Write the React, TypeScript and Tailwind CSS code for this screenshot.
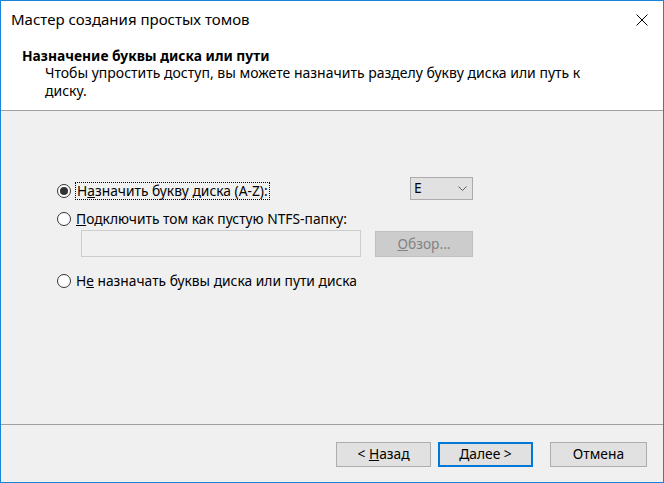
import React from "react";

function Radio({ checked }: { checked?: boolean }) {
  return (
    <div className="flex h-[14px] w-[14px] shrink-0 items-center justify-center rounded-full border border-[#333333] bg-white">
      {checked && <div className="h-[8px] w-[8px] rounded-full bg-[#333333]" />}
    </div>
  );
}

function Button({ children, isDefault, width }: { children: React.ReactNode; isDefault?: boolean; width: string }) {
  return (
    <div
      className={
        "flex h-[25px] items-center justify-center bg-[#e1e1e1] " +
        width +
        (isDefault ? " border-2 border-[#0078d7]" : " border border-[#adadad]")
      }
    >
      {children}
    </div>
  );
}

export default function App() {
  return (
    <div
      className="flex h-[483px] w-[664px] flex-col border border-[#1883d7] bg-white text-[13.8px] text-black"
      style={{ fontFamily: '"Noto Sans", "Open Sans", sans-serif' }}
    >
      {/* Header */}
      <div className="h-[110px] shrink-0 border-b border-[#a0a0a0] bg-white">
        <div className="flex h-[36px] items-center justify-between pl-[10px] pr-[15px]">
          <span className="text-[15px] leading-none">Мастер создания простых томов</span>
          <svg width="12" height="12" viewBox="0 0 12 12" className="mt-[1px]">
            <path d="M0.5 0.5 L11.5 11.5 M11.5 0.5 L0.5 11.5" stroke="#000" strokeWidth="1" fill="none" />
          </svg>
        </div>
        <div className="mt-[10px] pl-[21px] font-bold leading-[17px]">Назначение буквы диска или пути</div>
        <div className="pl-[44px] text-[14px] leading-[18px]">
          Чтобы упростить доступ, вы можете назначить разделу букву диска или путь к
          <br />
          диску.
        </div>
      </div>

      {/* Body */}
      <div className="h-[314px] shrink-0 border-b border-[#a0a0a0] bg-[#f0f0f0] pl-[56px] pt-[70px]">
        <div className="flex h-[20px] w-[416px] items-center">
          <Radio checked />
          <span className="ml-[4px] border border-dotted border-black px-px leading-[16px]">
            Н<u>а</u>значить букву диска (A-Z):
          </span>
          <div className="mb-[5px] ml-auto flex h-[23px] w-[63px] items-center justify-between border border-[#acacac] bg-[#e1e1e1] pl-[3px] pr-[5px]">
            <span>E</span>
            <svg width="9" height="5" viewBox="0 0 9 5">
              <polyline points="0.5,0.5 4.5,4.5 8.5,0.5" stroke="#606060" strokeWidth="1" fill="none" />
            </svg>
          </div>
        </div>

        <div className="mt-[8px] flex h-[20px] items-center">
          <Radio />
          <span className="ml-[5px]">
            <u>П</u>одключить том как пустую NTFS-папку:
          </span>
        </div>

        <div className="ml-[24px] mt-[1px] flex w-[392px] items-start">
          <div className="h-[27px] w-[280px] border border-[#cccccc] bg-[#f0f0f0]" />
          <div className="ml-auto mt-[1px] flex h-[26px] w-[98px] items-center justify-center border border-[#bfbfbf] bg-[#cccccc] text-[#838383]">
            <span>
              <u>О</u>бзор...
            </span>
          </div>
        </div>

        <div className="mt-[14px] flex h-[20px] items-center">
          <Radio />
          <span className="ml-[5px]">
            Н<u>е</u> назначать буквы диска или пути диска
          </span>
        </div>
      </div>

      {/* Footer */}
      <div className="flex flex-1 items-start justify-end bg-[#f0f0f0] pr-[16px] pt-[17px]">
        <Button width="w-[95px]">
          <span>
            &lt; <u>Н</u>азад
          </span>
        </Button>
        <div className="ml-[7px]">
          <Button width="w-[95px]" isDefault>
            <span>
              <u>Д</u>алее &gt;
            </span>
          </Button>
        </div>
        <div className="ml-[17px]">
          <Button width="w-[97px]">
            <span>Отмена</span>
          </Button>
        </div>
      </div>
    </div>
  );
}
